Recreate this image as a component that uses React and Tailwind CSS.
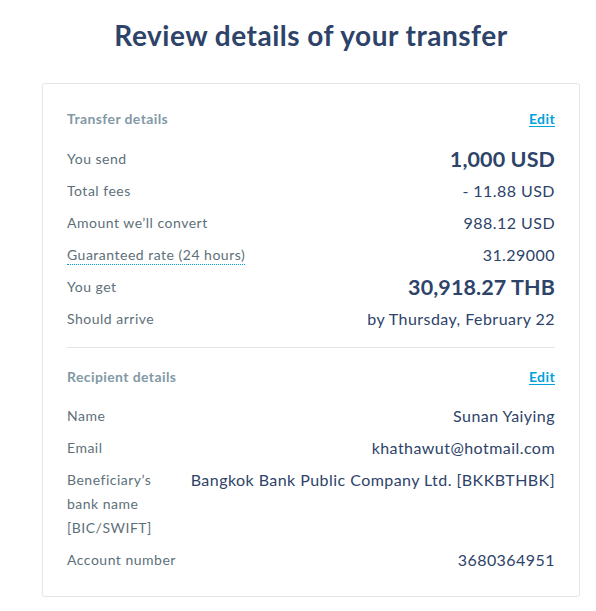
import React from "react";

const transfer = [
  { label: "You send", value: "1,000 USD", big: true },
  { label: "Total fees", value: "- 11.88 USD" },
  { label: "Amount we’ll convert", value: "988.12 USD" },
  { label: "Guaranteed rate (24 hours)", value: "31.29000", dotted: true },
  { label: "You get", value: "30,918.27 THB", big: true },
  { label: "Should arrive", value: "by Thursday, February 22" },
];

const recipient = [
  { label: "Name", value: "Sunan Yaiying" },
  { label: "Email", value: "khathawut@hotmail.com" },
  { label: "Beneficiary’s bank name [BIC/SWIFT]", value: "Bangkok Bank Public Company Ltd. [BKKBTHBK]", narrow: true },
  { label: "Account number", value: "3680364951" },
];

const SectionHead = ({ title }) => (
  <div className="flex items-center justify-between h-6">
    <span className="text-[14px] font-bold tracking-[0.4px] text-[#8299a6]">{title}</span>
    <a href="#" className="text-[14px] font-bold tracking-[0.4px] text-[#00a2dd] underline underline-offset-2">Edit</a>
  </div>
);

const Row = ({ label, value, big, dotted, narrow }) => (
  <div className="flex items-start justify-between gap-4">
    <span
      className={
        "min-w-0 text-[14px] leading-6 tracking-[0.5px] text-[#5d7079] " +
        (narrow ? "max-w-[100px]" : "whitespace-nowrap")
      }
    >
      {dotted ? (
        <span className="border-b border-dotted border-[#00a2dd] pb-px">{label}</span>
      ) : (
        label
      )}
    </span>
    <span
      className={
        "shrink-0 whitespace-nowrap text-right leading-6 text-[#2e4369] " +
        (big ? "text-[21.5px] font-bold tracking-[0.1px]" : "text-[16px] tracking-[0.45px]")
      }
    >
      {value}
    </span>
  </div>
);

export default function App() {
  return (
    <div className="min-h-screen bg-white pt-[15px] font-['Lato',sans-serif]">
      <h1 className="ml-[42px] w-[538px] text-center text-[28px] font-bold leading-10 tracking-[0.5px] text-[#2e4369]">
        Review details of your transfer
      </h1>
      <div className="ml-[42px] mt-[28px] w-[538px] rounded-[3px] border border-[#e2e6e8] px-6 pt-[22px] pb-6">
        <SectionHead title="Transfer details" />
        <div className="mt-[17px] flex flex-col gap-2">
          {transfer.map((r) => (
            <Row key={r.label} {...r} />
          ))}
        </div>
        <div className="my-4 h-px bg-[#e2e6e8]" />
        <SectionHead title="Recipient details" />
        <div className="mt-4 flex flex-col gap-2">
          {recipient.map((r) => (
            <Row key={r.label} {...r} />
          ))}
        </div>
      </div>
    </div>
  );
}
